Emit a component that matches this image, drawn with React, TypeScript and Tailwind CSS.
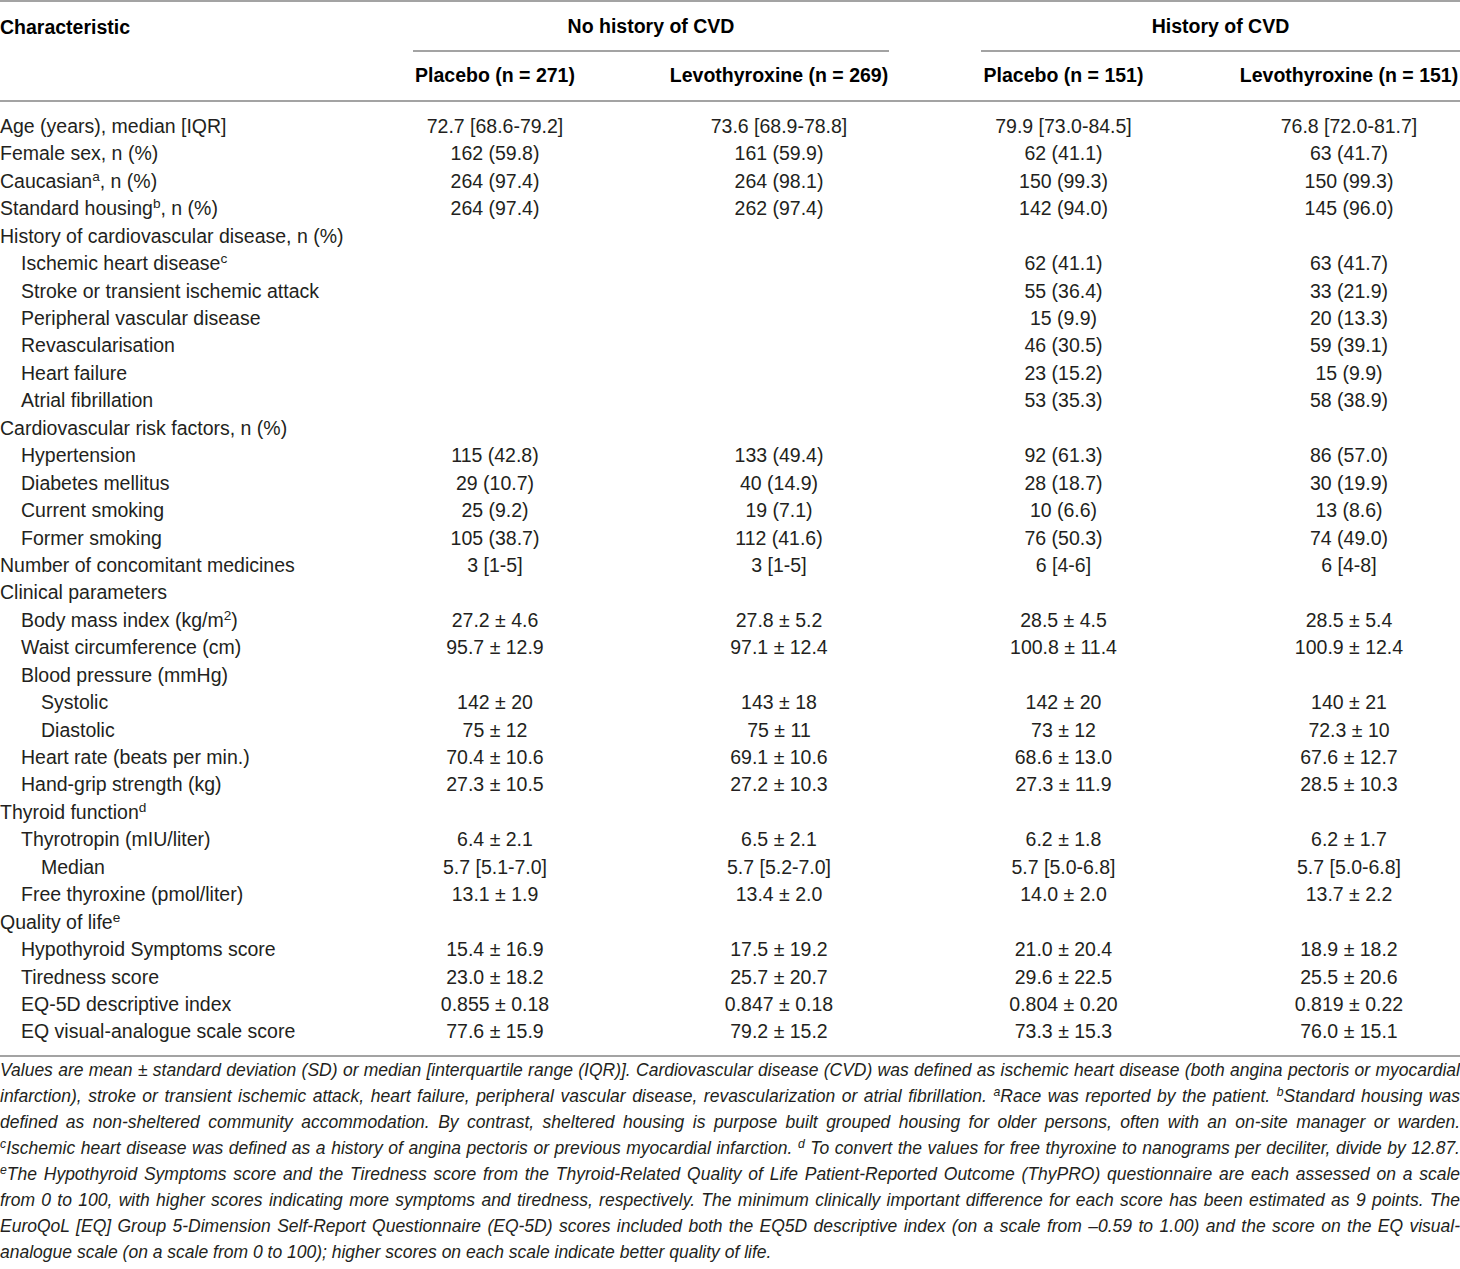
import type { ReactNode } from "react";

type Row = {
  label: ReactNode;
  level?: 0 | 1 | 2;
  values?: [string, string, string, string];
};

const s = (c: string) => <sup className="text-[0.7em]">{c}</sup>;

const rows: Row[] = [
  { label: "Age (years), median [IQR]", values: ["72.7 [68.6-79.2]", "73.6 [68.9-78.8]", "79.9 [73.0-84.5]", "76.8 [72.0-81.7]"] },
  { label: "Female sex, n (%)", values: ["162 (59.8)", "161 (59.9)", "62 (41.1)", "63 (41.7)"] },
  { label: <>Caucasian{s("a")}, n (%)</>, values: ["264 (97.4)", "264 (98.1)", "150 (99.3)", "150 (99.3)"] },
  { label: <>Standard housing{s("b")}, n (%)</>, values: ["264 (97.4)", "262 (97.4)", "142 (94.0)", "145 (96.0)"] },
  { label: "History of cardiovascular disease, n (%)" },
  { label: <>Ischemic heart disease{s("c")}</>, level: 1, values: ["", "", "62 (41.1)", "63 (41.7)"] },
  { label: "Stroke or transient ischemic attack", level: 1, values: ["", "", "55 (36.4)", "33 (21.9)"] },
  { label: "Peripheral vascular disease", level: 1, values: ["", "", "15 (9.9)", "20 (13.3)"] },
  { label: "Revascularisation", level: 1, values: ["", "", "46 (30.5)", "59 (39.1)"] },
  { label: "Heart failure", level: 1, values: ["", "", "23 (15.2)", "15 (9.9)"] },
  { label: "Atrial fibrillation", level: 1, values: ["", "", "53 (35.3)", "58 (38.9)"] },
  { label: "Cardiovascular risk factors, n (%)" },
  { label: "Hypertension", level: 1, values: ["115 (42.8)", "133 (49.4)", "92 (61.3)", "86 (57.0)"] },
  { label: "Diabetes mellitus", level: 1, values: ["29 (10.7)", "40 (14.9)", "28 (18.7)", "30 (19.9)"] },
  { label: "Current smoking", level: 1, values: ["25 (9.2)", "19 (7.1)", "10 (6.6)", "13 (8.6)"] },
  { label: "Former smoking", level: 1, values: ["105 (38.7)", "112 (41.6)", "76 (50.3)", "74 (49.0)"] },
  { label: "Number of concomitant medicines", values: ["3 [1-5]", "3 [1-5]", "6 [4-6]", "6 [4-8]"] },
  { label: "Clinical parameters" },
  { label: <>Body mass index (kg/m{s("2")})</>, level: 1, values: ["27.2 ± 4.6", "27.8 ± 5.2", "28.5 ± 4.5", "28.5 ± 5.4"] },
  { label: "Waist circumference (cm)", level: 1, values: ["95.7 ± 12.9", "97.1 ± 12.4", "100.8 ± 11.4", "100.9 ± 12.4"] },
  { label: "Blood pressure (mmHg)", level: 1 },
  { label: "Systolic", level: 2, values: ["142 ± 20", "143 ± 18", "142 ± 20", "140 ± 21"] },
  { label: "Diastolic", level: 2, values: ["75 ± 12", "75 ± 11", "73 ± 12", "72.3 ± 10"] },
  { label: "Heart rate (beats per min.)", level: 1, values: ["70.4 ± 10.6", "69.1 ± 10.6", "68.6 ± 13.0", "67.6 ± 12.7"] },
  { label: "Hand-grip strength (kg)", level: 1, values: ["27.3 ± 10.5", "27.2 ± 10.3", "27.3 ± 11.9", "28.5 ± 10.3"] },
  { label: <>Thyroid function{s("d")}</> },
  { label: "Thyrotropin (mIU/liter)", level: 1, values: ["6.4 ± 2.1", "6.5 ± 2.1", "6.2 ± 1.8", "6.2 ± 1.7"] },
  { label: "Median", level: 2, values: ["5.7 [5.1-7.0]", "5.7 [5.2-7.0]", "5.7 [5.0-6.8]", "5.7 [5.0-6.8]"] },
  { label: "Free thyroxine (pmol/liter)", level: 1, values: ["13.1 ± 1.9", "13.4 ± 2.0", "14.0 ± 2.0", "13.7 ± 2.2"] },
  { label: <>Quality of life{s("e")}</> },
  { label: "Hypothyroid Symptoms score", level: 1, values: ["15.4 ± 16.9", "17.5 ± 19.2", "21.0 ± 20.4", "18.9 ± 18.2"] },
  { label: "Tiredness score", level: 1, values: ["23.0 ± 18.2", "25.7 ± 20.7", "29.6 ± 22.5", "25.5 ± 20.6"] },
  { label: "EQ-5D descriptive index", level: 1, values: ["0.855 ± 0.18", "0.847 ± 0.18", "0.804 ± 0.20", "0.819 ± 0.22"] },
  { label: "EQ visual-analogue scale score", level: 1, values: ["77.6 ± 15.9", "79.2 ± 15.2", "73.3 ± 15.3", "76.0 ± 15.1"] },
];

const indent = ["pl-0", "pl-[21px]", "pl-[41px]"];
const cols = "grid grid-cols-[367px_256px_312px_257px_268px]";
const cell = ["px-[46px]", "px-[46px]", "px-[46px]", "pl-[46px]"];

// each footnote line is justified on its own, so breaks follow the original
const notes: ReactNode[] = [
  <>Values are mean ± standard deviation (SD) or median [interquartile range (IQR)]. Cardiovascular disease (CVD) was defined as ischemic heart disease (both angina pectoris or myocardial</>,
  <>infarction), stroke or transient ischemic attack, heart failure, peripheral vascular disease, revascularization or atrial fibrillation. {s("a")}Race was reported by the patient. {s("b")}Standard housing was</>,
  <>defined as non-sheltered community accommodation. By contrast, sheltered housing is purpose built grouped housing for older persons, often with an on-site manager or warden.</>,
  <>{s("c")}Ischemic heart disease was defined as a history of angina pectoris or previous myocardial infarction. {s("d")} To convert the values for free thyroxine to nanograms per deciliter, divide by 12.87.</>,
  <>{s("e")}The Hypothyroid Symptoms score and the Tiredness score from the Thyroid-Related Quality of Life Patient-Reported Outcome (ThyPRO) questionnaire are each assessed on a scale</>,
  <>from 0 to 100, with higher scores indicating more symptoms and tiredness, respectively. The minimum clinically important difference for each score has been estimated as 9 points. The</>,
  <>EuroQoL [EQ] Group 5-Dimension Self-Report Questionnaire (EQ-5D) scores included both the EQ5D descriptive index (on a scale from –0.59 to 1.00) and the score on the EQ visual-</>,
  <>analogue scale (on a scale from 0 to 100); higher scores on each scale indicate better quality of life.</>,
];

export default function App() {
  return (
    <div className="w-[1460px] min-h-[1269px] bg-white font-['Liberation_Sans',Arial,sans-serif] text-[#231f20]">
      {/* Header */}
      <div className={`${cols} border-t-2 border-b-2 border-[#a3a3a3] text-[19.5px] font-bold text-black`}>
        <div className="h-[50px] flex items-center pt-[2px]">Characteristic</div>
        <div className="col-span-2 px-[46px] h-[50px]">
          <div className="h-full flex items-center justify-center border-b-2 border-[#a3a3a3] pt-[2px]">No history of CVD</div>
        </div>
        <div className="col-span-2 pl-[46px] h-[50px]">
          <div className="h-full flex items-center justify-center border-b-2 border-[#a3a3a3] pt-[2px]">History of CVD</div>
        </div>
        <div className="h-[48px]" />
        {["Placebo (n = 271)", "Levothyroxine (n = 269)", "Placebo (n = 151)", "Levothyroxine (n = 151)"].map((h, i) => (
          <div key={h + i} className={`${cell[i]} h-[48px] flex items-center justify-center whitespace-nowrap`}>
            {h}
          </div>
        ))}
      </div>

      {/* Body */}
      <div className="pt-[11px] pb-[9px] border-b-2 border-[#a3a3a3] text-[19.5px]">
        {rows.map((r, i) => (
          <div key={i} className={`${cols} h-[27.45px] items-center leading-none`}>
            <div className={`${indent[r.level ?? 0]} whitespace-nowrap`}>{r.label}</div>
            {[0, 1, 2, 3].map((c) => (
              <div key={c} className={`${cell[c]} text-center whitespace-nowrap`}>
                {r.values?.[c] ?? ""}
              </div>
            ))}
          </div>
        ))}
      </div>

      {/* Footnotes */}
      <div className="text-[17.5px] italic leading-[26px] text-[#231f20]">
        {notes.map((n, i) => (
          <div
            key={i}
            className={i === notes.length - 1 ? "text-left whitespace-nowrap" : "text-justify [text-align-last:justify] whitespace-nowrap"}
          >
            {n}
          </div>
        ))}
      </div>
    </div>
  );
}
